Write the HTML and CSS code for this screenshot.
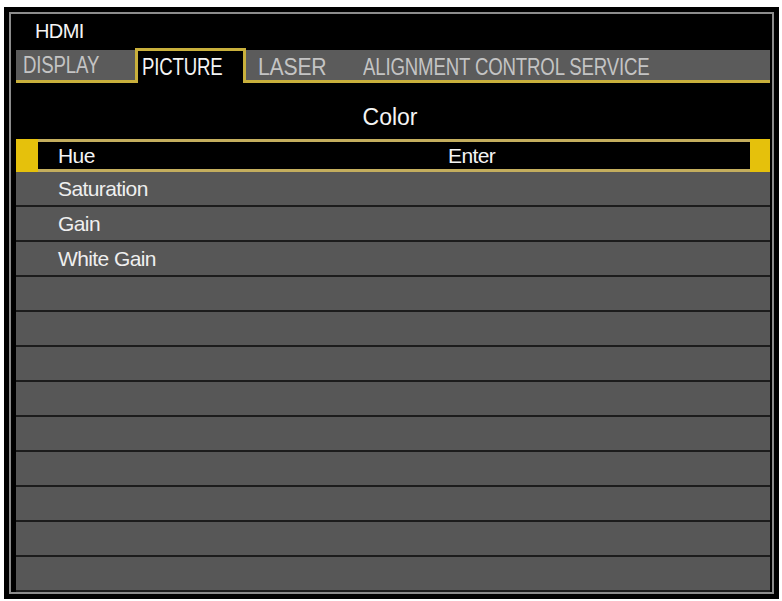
FILE: index.html
```html
<!DOCTYPE html>
<html>
<head>
<meta charset="utf-8">
<link rel="stylesheet" href="styles.css">
</head>
<body>
<div class="frame">
  <div class="panel">
    <div class="source">HDMI</div>
    <div class="tabs">
      <div class="tab tab-display"><span class="tab-text">DISPLAY</span></div>
      <div class="tab tab-active"><span class="tab-text">PICTURE</span></div>
      <div class="tab tab-rest"><span class="tab-laser"><span class="tab-text tab-text-wide">LASER</span></span><span class="tab-text">ALIGNMENT CONTROL SERVICE</span></div>
    </div>
    <div class="title">Color</div>
    <div class="list">
      <div class="row-selected">
        <div class="sel-inner"><span class="label">Hue</span><span class="value">Enter</span></div>
      </div>
      <div class="row">Saturation</div>
      <div class="row">Gain</div>
      <div class="row">White Gain</div>
      <div class="row"></div>
      <div class="row"></div>
      <div class="row"></div>
      <div class="row"></div>
      <div class="row"></div>
      <div class="row"></div>
      <div class="row"></div>
      <div class="row"></div>
      <div class="row"></div>
    </div>
  </div>
</div>
</body>
</html>
```
FILE: styles.css
```css
* { box-sizing: border-box; }
html, body { margin: 0; padding: 0; background: #ffffff; }
body {
  padding: 7px 0 0 4px;
  font-family: "Liberation Sans", Arial, sans-serif;
  color: #f2f2f2;
}
.frame {
  width: 775px;
  height: 592px;
  background: #000;
  padding: 5px;
}
.panel {
  width: 765px;
  height: 582px;
  border: 2px solid #8c8c8c;
  background: #000;
  padding: 0 2px 0 5px;
  display: flex;
  flex-direction: column;
}
.source {
  height: 34px;
  padding: 7px 0 0 19px;
  font-size: 20px;
  line-height: 20px;
  letter-spacing: -0.6px;
  color: #f4f4f4;
}
.tabs {
  height: 35px;
  display: flex;
  align-items: flex-end;
  font-size: 23px;
  line-height: 30px;
}
.tab {
  height: 33px;
  background: #5b5b5b;
  border-bottom: 3px solid #c9b03c;
  color: #c4c4c4;
  white-space: nowrap;
  overflow: hidden;
}
.tab-text {
  display: inline-block;
  transform: scaleX(0.81);
  transform-origin: left center;
  letter-spacing: -0.2px;
}
.tab-text-wide { transform: scaleX(0.92); }
.tab-display {
  width: 119px;
  padding-left: 7px;
}
.tab-active {
  width: 111px;
  height: 35px;
  background: #000;
  border: 3px solid #c9b03c;
  border-bottom: none;
  padding: 1px 0 0 4px;
  color: #f4f4f4;
}
.tab-rest {
  flex: 1;
  padding: 2px 0 0 12px;
  display: flex;
}
.tab-laser { width: 105px; }
.title {
  height: 56px;
  padding: 9px 6px 0 0;
  text-align: center;
  font-size: 23px;
  line-height: 50px;
  color: #f4f4f4;
}
.list {
  display: flex;
  flex-direction: column;
  font-size: 21px;
  letter-spacing: -0.6px;
}
.row-selected {
  height: 33px;
  background: #e5c10c;
  padding: 0 20px 0 22px;
}
.sel-inner {
  height: 33px;
  background: #000;
  border-top: 3px solid #c4ae5e;
  border-bottom: 3px solid #c4ae5e;
  padding: 1px 0 0 20px;
  line-height: 26px;
  display: flex;
  color: #f4f4f4;
}
.label { width: 390px; }
.row {
  height: 35px;
  background: #575757;
  border-bottom: 2px solid #1c1c1c;
  padding: 1px 0 0 42px;
  line-height: 32px;
  color: #efefef;
}
```
